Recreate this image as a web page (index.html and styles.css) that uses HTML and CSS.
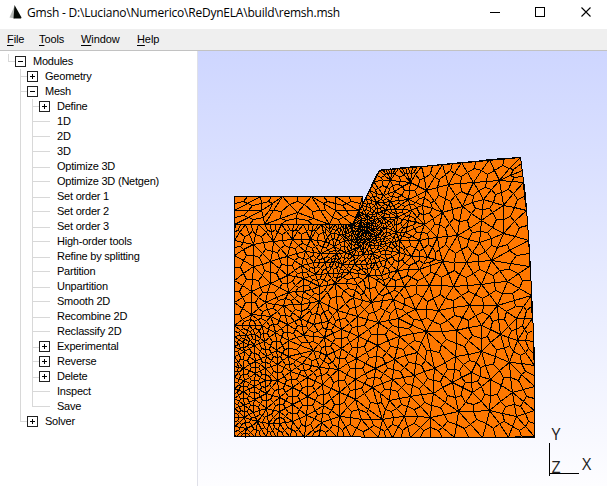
FILE: index.html
```html
<!DOCTYPE html>
<html lang="en">
<head>
<meta charset="utf-8">
<title>Gmsh</title>
<link rel="stylesheet" href="styles.css">
</head>
<body>
<header class="titlebar">
  <svg class="logo" width="14" height="14" viewBox="0 0 14 14"><path d="M5.500 1 0.500 12.500 6 13.500z" fill="#b9bcb9"/><path d="M5.500 0 12.500 12.500 12 13.500 4.500 13.500z" fill="#060a06"/></svg>
  <span class="title">Gmsh - D:\Luciano\Numerico\ReDynELA\build\remsh.msh</span>
  <svg class="controls" width="117" height="29" viewBox="0 0 117 29" fill="none" stroke="#000"><path d="M0 12.500h10M45.500 7.500h9v9h-9z" shape-rendering="crispEdges"/><path d="M91.500 7.500l9 9M100.500 7.500l-9 9" stroke-width="1.1"/></svg>
</header>
<nav class="menubar">
  <span class="m-file"><u>F</u>ile</span><span class="m-tools"><u>T</u>ools</span><span class="m-window"><u>W</u>indow</span><span><u>H</u>elp</span>
</nav>
<main class="work">
  <div class="tree">
    <div class="row root"><i class="up"></i><b class="minus"></b>Modules</div>
    <div class="row"><i class="tee"></i><b class="plus"></b>Geometry</div>
    <div class="row"><i class="tee"></i><b class="minus"></b>Mesh</div>
    <div class="row"><i class="bar"></i><i class="tee"></i><b class="plus"></b>Define</div>
    <div class="row"><i class="bar"></i><i class="tee leaf"></i>1D</div>
    <div class="row"><i class="bar"></i><i class="tee leaf"></i>2D</div>
    <div class="row"><i class="bar"></i><i class="tee leaf"></i>3D</div>
    <div class="row"><i class="bar"></i><i class="tee leaf low"></i>Optimize 3D</div>
    <div class="row"><i class="bar"></i><i class="tee leaf"></i>Optimize 3D (Netgen)</div>
    <div class="row"><i class="bar"></i><i class="tee leaf low"></i>Set order 1</div>
    <div class="row"><i class="bar"></i><i class="tee leaf"></i>Set order 2</div>
    <div class="row"><i class="bar"></i><i class="tee leaf low"></i>Set order 3</div>
    <div class="row"><i class="bar"></i><i class="tee leaf"></i>High-order tools</div>
    <div class="row"><i class="bar"></i><i class="tee leaf low"></i>Refine by splitting</div>
    <div class="row"><i class="bar"></i><i class="tee leaf"></i>Partition</div>
    <div class="row"><i class="bar"></i><i class="tee leaf low"></i>Unpartition</div>
    <div class="row"><i class="bar"></i><i class="tee leaf"></i>Smooth 2D</div>
    <div class="row"><i class="bar"></i><i class="tee leaf low"></i>Recombine 2D</div>
    <div class="row"><i class="bar"></i><i class="tee leaf"></i>Reclassify 2D</div>
    <div class="row"><i class="bar"></i><i class="tee low"></i><b class="plus"></b>Experimental</div>
    <div class="row"><i class="bar"></i><i class="tee"></i><b class="plus"></b>Reverse</div>
    <div class="row"><i class="bar"></i><i class="tee low"></i><b class="plus"></b>Delete</div>
    <div class="row"><i class="bar"></i><i class="tee leaf"></i>Inspect</div>
    <div class="row"><i class="bar"></i><i class="end leaf"></i>Save</div>
    <div class="row"><i class="end"></i><b class="plus"></b>Solver</div>
  </div>
  <svg class="view" width="409" height="435" viewBox="198 51 409 435">
    <g shape-rendering="crispEdges">
      <path fill="#ff7800" d="M234 196H362.500V204L379 170 521 157 525.500 195 529 250 533 310 534.500 358V437H360V436H234z"/>
      <path id="mesh" class="wire"/>
      <path class="wire" d="M234.500 436.500V196.500H362.500V204.500L379.500 170.500 520.500 157.500 525.500 195.500 529.500 250.500 532.500 310.500 534.500 358.500V437.500H360.500M234.500 436.500H360.500M234.500 224.500H353.500L362.500 204.500"/>
      <path class="wire" d="M549.500 443V476M549 473.500H579"/>
    </g>
    <g class="axis"><text x="551.500" y="440">Y</text><text x="551.500" y="473">Z</text><text x="582" y="470">X</text></g>
  </svg>
</main>
<script src="mesh.js"></script>
</body>
</html>
```
FILE: styles.css
```css
* { box-sizing: border-box; }
body { margin: 0; width: 607px; height: 486px; overflow: hidden; background: #fff; color: #000; font-family: "Liberation Sans", Arial, sans-serif; display: flex; flex-direction: column; }
.titlebar { height: 29px; flex: none; display: flex; align-items: flex-start; padding-left: 9px; }
.logo { margin-top: 5px; flex: none; }
.title { margin-left: 4px; flex: 1; font: 12px/26px "Open Sans", sans-serif; letter-spacing: -0.21px; white-space: nowrap; }
.controls { flex: none; }
.menubar { height: 22px; flex: none; background: #efefef; border-bottom: 1px solid #c2c2c2; display: flex; padding-left: 7px; font-size: 11px; line-height: 20px; letter-spacing: -0.1px; }
.menubar u { text-underline-offset: 2px; }
.m-file { width: 32px; }
.m-tools { width: 42px; }
.m-window { width: 56px; }
.work { display: flex; flex: 1; }
.tree { width: 198px; flex: none; padding-top: 3px; font-size: 11px; letter-spacing: -0.22px; border-right: 1px solid #dfe0e8; }
.row { height: 15px; line-height: 15px; display: flex; padding-left: 20px; white-space: nowrap; }
.root { padding-left: 8px; }
.row i { width: 7px; height: 15px; flex: none; background: linear-gradient(#d8d8d8, #d8d8d8) 0 0 / 1px 15px no-repeat, linear-gradient(#d8d8d8, #d8d8d8) 0 7px / 100% 1px no-repeat; }
.row .bar { width: 12px; background-size: 1px 15px, 0 0; }
.row .up, .row .end { background-size: 1px 8px, 100% 1px; }
.row .low { background-position: 0 0, 0 8px; }
.row .leaf { width: 18px; margin-right: 7px; }
.row b { width: 11px; height: 11px; flex: none; margin: 2px 7px 0 0; border: 1px solid #222; background: linear-gradient(#000, #000) 2px 4px / 5px 1px no-repeat; }
.row .plus { background: linear-gradient(#000, #000) 2px 4px / 5px 1px no-repeat, linear-gradient(#000, #000) 4px 2px / 1px 5px no-repeat; }
.view { flex: none; display: block; background: linear-gradient(#ced6ff, #fdfdff); }
.wire { fill: none; stroke: #000; stroke-width: 1px; }
.axis { font: 16px "Open Sans", sans-serif; fill: #222; }
```
FILE: mesh.js
```js
// Triangulates the plate and splits each triangle into three quads.
const block = [[234,224],[353,224],[379,170],[520.5,157],[525,195],[529,250],[532,310],[534,358],[534,437],[234,437]];
const strip = [[234,196],[362,196],[362,204],[353,224],[234,224]];
const nodes = [];
function add(ox, oy, list) {
  for (let i = 0; i < list.length; i += 2) nodes.push([ox + list[i] / 3, oy + list[i + 1] / 3]);
}
add(380, 150, [-3,60,17,58,36,57,56,55,76,54,98,53,204,103,186,186,247,170,232,256,280,96,357,91,310,147,304,212,371,165,369,250,298,278,333,332,258,338,187,335,221,408,303,402,382,393,140,122,126,51,187,43,246,38,328,30,422,21,90,97,84,148,32,90,32,155,119,271,172,262,117,358,53,360,17,300,147,407,74,408,16,408,93,318,132,222,428,60,432,97,438,180,443,272,448,350,455,435]);
add(380, 290, [229,121,303,184,303,105,361,132,409,85,412,150,140,125,58,138,55,85,111,187,44,207,164,236,227,200,218,278,273,248,331,268,388,217,396,306,329,362,234,364,277,308,159,309,150,381,90,318,102,255,37,268,27,330,72,379,6,388,408,380,463,440,458,85,460,155,462,225,463,290,463,360,385,440,307,440,222,440,152,440,90,440,38,440,-6,440]);
add(225, 290, [80,72,30,107,30,38,78,5,175,47,187,103,120,37,137,80,230,42,227,85,236,135,297,142,284,35,337,60,349,118,383,22,397,80,438,37,460,97,400,138,457,167,349,175,394,205,340,238,451,234,391,267,443,293,391,328,343,307,293,283,247,263,202,293,248,318,295,345,343,378,408,388,378,440,245,375,290,398,202,395,163,365,163,322,202,343,157,272,157,222,197,245,190,200,190,152,232,220,284,232,265,182,305,195,151,128,112,107,118,155,155,180,123,200,90,213,88,167,65,135,58,185,55,235,90,250,120,272,88,290,88,327,55,305,58,345,58,382,125,355,124,310,97,395,130,400,163,400,65,415,238,438,280,438,195,438,155,438,337,438,30,438,30,140,30,170,30,200,30,230,30,262,30,295,30,326,30,355,30,382,30,410,60,438,90,438,124,438]);
add(225, 150, [85,284,85,350,30,315,30,270,30,390,137,335,137,400,146,273,187,318,187,375,201,268,255,268,287,310,230,347,271,373,329,335,327,290,236,425,282,410,384,443,330,400,431,375,30,223,60,223,100,223,135,223,170,223,205,223,235,223,265,223,290,223,312,223,332,223,348,223,360,223,370,223,378,223,384,223]);

// Pull nodes lying close to the outline onto it.
for (const n of nodes) {
  for (let i = 0; i < block.length; i++) {
    const p = block[i], q = block[(i + 1) % block.length];
    const dx = q[0] - p[0], dy = q[1] - p[1];
    const t = Math.max(0, Math.min(1, ((n[0] - p[0]) * dx + (n[1] - p[1]) * dy) / (dx * dx + dy * dy)));
    const x = p[0] + t * dx, y = p[1] + t * dy;
    if (Math.hypot(n[0] - x, n[1] - y) < 2.5) { n[0] = x; n[1] = y; break; }
  }
}

let seed = 4217;
const rnd = () => (seed = (seed * 16807) % 2147483647) / 2147483647;
function inside(p, x, y) {
  let c = false;
  for (let i = 0, j = p.length - 1; i < p.length; j = i++) {
    if ((p[i][1] > y) !== (p[j][1] > y) && x < (p[j][0] - p[i][0]) * (y - p[i][1]) / (p[j][1] - p[i][1]) + p[i][0]) c = !c;
  }
  return c;
}
// Target edge length around a position.
function size(x, y) {
  const d = Math.hypot(x - 366, (y - 229) * 1.05);
  let far = x < 330 ? 17 : 17 + Math.min(8, (x - 330) / 12);
  if (x < 275 && y > 325) far = 10 + Math.max(0, x - 255) * 0.25;
  const band = Math.abs((x - 366) * 0.67 + (y - 229) * 0.74);
  const grow = x < 366 && y > 229 ? 0.13 + Math.min(0.1, band / 500) : 0.19;
  return Math.min(far, 3.6 + d * grow);
}
function tryAdd(x, y, k) {
  const h = size(x, y) * k;
  for (const n of nodes) if ((n[0] - x) ** 2 + (n[1] - y) ** 2 < h * h) return;
  nodes.push([x, y]);
}
for (let t = 0; t <= 1; t += 0.01) tryAdd(379 - 26 * t, 170 + 54 * t, 0.9);
for (let i = 0; i < 14000; i++) {
  const x = 350 + rnd() * 50, y = 195 + rnd() * 65;
  if (inside(block, x, y) && ((x - 353) * 54 + (y - 224) * 26 > 90 || y > 226)) tryAdd(x, y, 0.84);
}
for (let i = 0; i < 16000; i++) {
  const x = 238 + rnd() * 288, y = 162 + rnd() * 269;
  if (inside(block, x + 4, y - 4) && inside(block, x, y) && (y > 228 || x > 364)) tryAdd(x, y, 0.84);
}

function circle(a, b, c) {
  const d = 2 * (a[0] * (b[1] - c[1]) + b[0] * (c[1] - a[1]) + c[0] * (a[1] - b[1])) || 1e-9;
  const s = p => p[0] * p[0] + p[1] * p[1];
  const x = (s(a) * (b[1] - c[1]) + s(b) * (c[1] - a[1]) + s(c) * (a[1] - b[1])) / d;
  const y = (s(a) * (c[0] - b[0]) + s(b) * (a[0] - c[0]) + s(c) * (b[0] - a[0])) / d;
  return { a, b, c, x, y, r: (a[0] - x) ** 2 + (a[1] - y) ** 2 };
}
function delaunay(pts) {
  let tris = [circle([-4000, -3000], [5000, -3000], [400, 7000])];
  for (const q of pts) {
    const p = [q[0] + rnd() * 0.01, q[1] + rnd() * 0.01];
    const edges = [];
    const keep = [];
    for (const t of tris) {
      if ((p[0] - t.x) ** 2 + (p[1] - t.y) ** 2 < t.r) edges.push([t.a, t.b], [t.b, t.c], [t.c, t.a]);
      else keep.push(t);
    }
    for (const e of edges) {
      if (!edges.some(f => f !== e && f[0] === e[1] && f[1] === e[0])) keep.push(circle(e[0], e[1], p));
    }
    tris = keep;
  }
  return tris;
}
const parts = [];
const at = p => (Math.floor(p[0]) + 0.5) + " " + (Math.floor(p[1]) + 0.5);
// Shortest height of a triangle, used to drop slivers along the outline.
function thin(t) {
  const area = Math.abs((t.b[0] - t.a[0]) * (t.c[1] - t.a[1]) - (t.c[0] - t.a[0]) * (t.b[1] - t.a[1]));
  const side = Math.max(Math.hypot(t.a[0] - t.b[0], t.a[1] - t.b[1]), Math.hypot(t.b[0] - t.c[0], t.b[1] - t.c[1]), Math.hypot(t.c[0] - t.a[0], t.c[1] - t.a[1]));
  return area / side < 1.2;
}
function draw(pts, poly) {
  const seen = new Set();
  const line = (p, q) => {
    const s = "M" + at(p) + "L" + at(q);
    const r = "M" + at(q) + "L" + at(p);
    if (!seen.has(s) && !seen.has(r)) { seen.add(s); parts.push(s); }
  };
  for (const t of delaunay(pts)) {
    const g = [(t.a[0] + t.b[0] + t.c[0]) / 3, (t.a[1] + t.b[1] + t.c[1]) / 3];
    if (!inside(poly, g[0], g[1]) || thin(t)) continue;
    for (const [p, q] of [[t.a, t.b], [t.b, t.c], [t.c, t.a]]) {
      const m = [(p[0] + q[0]) / 2, (p[1] + q[1]) / 2];
      line(g, m);
      if (inside(poly, m[0], m[1])) { line(p, m); line(m, q); }
    }
  }
}
draw(nodes, block);
nodes.length = 0;
add(225, 150, [28,140,107,140,173,140,260,140,330,140,411,140,28,182,28,223,110,180,216,186,330,180,118,223,215,223,312,223,383,223,400,180]);
draw(nodes, strip);
document.getElementById("mesh").setAttribute("d", parts.join(""));
```
